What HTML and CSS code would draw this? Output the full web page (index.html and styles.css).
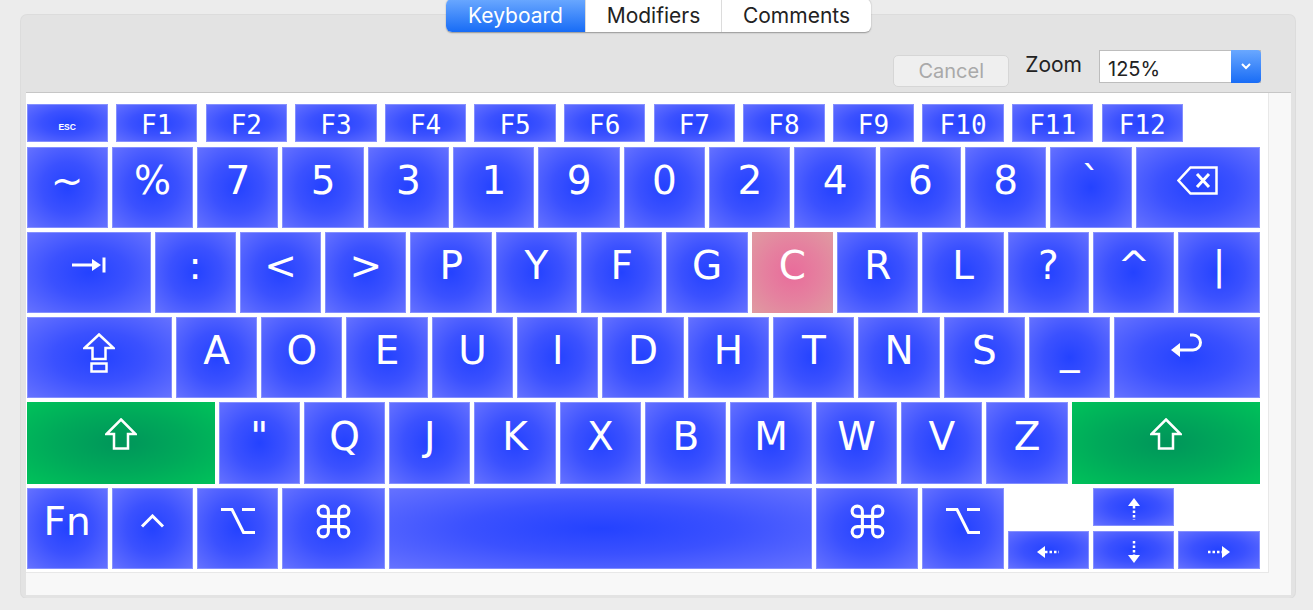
FILE: index.html
```html
<!DOCTYPE html>
<html>
<head>
<meta charset="utf-8">
<link rel="stylesheet" href="styles.css">
</head>
<body>
<div class="panel">
  <div class="tabs">
    <div class="tab sel t1">Keyboard</div>
    <div class="tab t2">Modifiers</div>
    <div class="tab t3">Comments</div>
  </div>
  <div class="toolbar">
    <div class="cancel">Cancel</div>
    <div class="zlabel">Zoom</div>
    <div class="select">
      <div class="val">125%</div>
      <div class="btn"><svg width="10" height="7" viewBox="0 0 10 7"><polyline points="1,1 5,5 9,1" fill="none" stroke="#fff" stroke-width="2"/></svg></div>
    </div>
  </div>
  <div class="scroll">
    <div class="doc">
      <div class="fnrow">
        <div class="k fnk esc">ESC</div>
        <div class="k fnk">F1</div>
        <div class="k fnk">F2</div>
        <div class="k fnk">F3</div>
        <div class="k fnk">F4</div>
        <div class="k fnk">F5</div>
        <div class="k fnk">F6</div>
        <div class="k fnk">F7</div>
        <div class="k fnk">F8</div>
        <div class="k fnk">F9</div>
        <div class="k fnk">F10</div>
        <div class="k fnk">F11</div>
        <div class="k fnk">F12</div>
      </div>
      <div class="row">
        <div class="k w1">~</div>
        <div class="k w1">%</div>
        <div class="k w1">7</div>
        <div class="k w1">5</div>
        <div class="k w1">3</div>
        <div class="k w1">1</div>
        <div class="k w1">9</div>
        <div class="k w1">0</div>
        <div class="k w1">2</div>
        <div class="k w1">4</div>
        <div class="k w1">6</div>
        <div class="k w1">8</div>
        <div class="k w1">`</div>
        <div class="k w15"><svg width="41" height="29" viewBox="0 0 41 29"><path d="M13.5 1.5H39.5V27.5H13.5L1.5 14.5Z" fill="none" stroke="#fff" stroke-width="2.5"/><path d="M20 8L32 21M32 8L20 21" stroke="#fff" stroke-width="3"/></svg></div>
      </div>
      <div class="row">
        <div class="k w15"><svg width="34" height="16" viewBox="0 0 34 16"><path d="M0 8H24" stroke="#fff" stroke-width="3"/><path d="M20 2L29 8L20 14Z" fill="#fff"/><rect x="30.5" y="0.5" width="3" height="15" fill="#fff"/></svg></div>
        <div class="k w1">:</div>
        <div class="k w1">&lt;</div>
        <div class="k w1">&gt;</div>
        <div class="k w1">P</div>
        <div class="k w1">Y</div>
        <div class="k w1">F</div>
        <div class="k w1">G</div>
        <div class="k w1 pink">C</div>
        <div class="k w1">R</div>
        <div class="k w1">L</div>
        <div class="k w1">?</div>
        <div class="k w1">^</div>
        <div class="k w1">|</div>
      </div>
      <div class="row">
        <div class="k w175 caps"><svg width="32" height="40" viewBox="0 0 32 40"><path d="M16 1.5L30.5 15H22.5V26H9.5V15H1.5Z" fill="none" stroke="#fff" stroke-width="2.5" stroke-linejoin="miter"/><rect x="8.5" y="30.5" width="15" height="8" fill="none" stroke="#fff" stroke-width="2.5"/></svg></div>
        <div class="k w1">A</div>
        <div class="k w1">O</div>
        <div class="k w1">E</div>
        <div class="k w1">U</div>
        <div class="k w1">I</div>
        <div class="k w1">D</div>
        <div class="k w1">H</div>
        <div class="k w1">T</div>
        <div class="k w1">N</div>
        <div class="k w1">S</div>
        <div class="k w1">_</div>
        <div class="k w175 ret"><svg width="32" height="26" viewBox="0 0 32 26"><path d="M0 17L9 10V24Z" fill="#fff"/><path d="M7 17H22A7.5 7.5 0 0 0 22 2H19" fill="none" stroke="#fff" stroke-width="3"/></svg></div>
      </div>
      <div class="row">
        <div class="k w225 green shift"><svg width="32" height="32" viewBox="0 0 32 32"><path d="M16 1.5L30.5 16H23V30.5H9V16H1.5Z" fill="none" stroke="#fff" stroke-width="2.5"/></svg></div>
        <div class="k w1">"</div>
        <div class="k w1">Q</div>
        <div class="k w1">J</div>
        <div class="k w1">K</div>
        <div class="k w1">X</div>
        <div class="k w1">B</div>
        <div class="k w1">M</div>
        <div class="k w1">W</div>
        <div class="k w1">V</div>
        <div class="k w1">Z</div>
        <div class="k w225 green shift"><svg width="32" height="32" viewBox="0 0 32 32"><path d="M16 1.5L30.5 16H23V30.5H9V16H1.5Z" fill="none" stroke="#fff" stroke-width="2.5"/></svg></div>
      </div>
      <div class="row">
        <div class="k w1">Fn</div>
        <div class="k w1"><svg width="25" height="14" viewBox="0 0 25 14"><polyline points="2,12.5 12.5,2 23,12.5" fill="none" stroke="#fff" stroke-width="3"/></svg></div>
        <div class="k w1"><svg width="34" height="28" viewBox="0 0 34 28"><path d="M0 2.5H11L22.5 25.5H34M21 2.5H34" fill="none" stroke="#fff" stroke-width="3"/></svg></div>
        <div class="k w125"><svg width="41" height="41" viewBox="0 0 24 24"><path d="M15 6v12a3 3 0 1 0 3-3H6a3 3 0 1 0 3 3V6a3 3 0 1 0-3 3h12a3 3 0 1 0-3-3" fill="none" stroke="#fff" stroke-width="1.8"/></svg></div>
        <div class="k w5"></div>
        <div class="k w125"><svg width="41" height="41" viewBox="0 0 24 24"><path d="M15 6v12a3 3 0 1 0 3-3H6a3 3 0 1 0 3 3V6a3 3 0 1 0-3 3h12a3 3 0 1 0-3-3" fill="none" stroke="#fff" stroke-width="1.8"/></svg></div>
        <div class="k w1"><svg width="34" height="28" viewBox="0 0 34 28"><path d="M0 2.5H11L22.5 25.5H34M21 2.5H34" fill="none" stroke="#fff" stroke-width="3"/></svg></div>
        <div class="arrows">
          <div class="arow">
            <div class="spacer"></div>
            <div class="k w1 ak"><svg width="12" height="22" viewBox="0 0 12 22"><path d="M6 0L12 8H0Z" fill="#fff"/><path d="M6 8V22" stroke="#fff" stroke-width="2.5" stroke-dasharray="2.5 2"/></svg></div>
          </div>
          <div class="arow">
            <div class="k w1 ak"><svg width="22" height="12" viewBox="0 0 22 12"><path d="M0 6L8 0V12Z" fill="#fff"/><path d="M8 6H22" stroke="#fff" stroke-width="2.5" stroke-dasharray="2.5 2"/></svg></div>
            <div class="k w1 ak"><svg width="12" height="22" viewBox="0 0 12 22"><path d="M6 22L12 14H0Z" fill="#fff"/><path d="M6 0V14" stroke="#fff" stroke-width="2.5" stroke-dasharray="2.5 2"/></svg></div>
            <div class="k w1 ak"><svg width="22" height="12" viewBox="0 0 22 12"><path d="M22 6L14 0V12Z" fill="#fff"/><path d="M0 6H14" stroke="#fff" stroke-width="2.5" stroke-dasharray="2.5 2"/></svg></div>
          </div>
        </div>
      </div>
    </div>
  </div>
</div>
</body>
</html>
```
FILE: styles.css
```css
* { box-sizing: border-box; }
body {
  margin: 0;
  background: #ececec;
  font-family: Inter, "Liberation Sans", sans-serif;
}
.panel {
  position: relative;
  margin: 15px 0 0 21px;
  width: 1274px;
  height: 583px;
  background: #e3e3e3;
  border-radius: 6px;
  box-shadow: 0 0 0 1px #dcdcdc;
}
.tabs {
  position: absolute;
  top: -16px;
  left: 425px;
  display: flex;
  height: 33px;
  background: #fff;
  border-radius: 6px;
  overflow: hidden;
  box-shadow: 0 0.5px 1.5px rgba(0,0,0,0.35);
}
.tab {
  display: flex;
  align-items: center;
  justify-content: center;
  font-size: 21px;
  color: #222;
  border-left: 1px solid #dcdcdc;
}
.tab.sel {
  background: linear-gradient(#6aa8ff, #186cf6);
  color: #fff;
  border-left: none;
}
.t1 { width: 139px; }
.t2 { width: 136px; }
.t3 { width: 150px; }
.toolbar {
  height: 77px;
  display: flex;
  justify-content: flex-end;
  align-items: flex-start;
  padding-right: 34px;
}
.cancel {
  margin-top: 40px;
  width: 116px;
  height: 32px;
  border: 1px solid #d6d6d6;
  border-radius: 5px;
  background: #efefef;
  color: #a9a9a9;
  font-size: 20px;
  display: flex;
  align-items: center;
  justify-content: center;
}
.zlabel {
  margin: 37px 0 0 16px;
  font-size: 21px;
  line-height: 25px;
  color: #222;
}
.select {
  margin: 35px 0 0 17px;
  width: 162px;
  height: 33px;
  border: 1px solid #bdbdbd;
  background: #fff;
  display: flex;
}
.select .val {
  flex: 1;
  font-size: 20px;
  padding: 4px 0 0 8px;
  display: flex;
  align-items: center;
  color: #222;
}
.select .btn {
  width: 30px;
  margin: -1px -1px -1px 0;
  background: linear-gradient(#6aa8ff, #186cf6);
  border-radius: 0 4px 4px 0;
  display: flex;
  align-items: center;
  justify-content: center;
}
.scroll {
  margin: 0 4px 0 5px;
  height: 503px;
  border-top: 1px solid #c6c6c6;
  background: #f8f8f8;
}
.doc {
  width: 1243px;
  height: 480px;
  background: #fff;
  border-right: 1px solid #e8e8e8;
  border-bottom: 1px solid #e8e8e8;
  padding: 11px 0 0 0.5px;
}
.fnrow {
  display: flex;
  gap: 8.27px;
  height: 38px;
  margin-bottom: 4.5px;
}
.row {
  display: flex;
  gap: 4px;
  height: 81.33px;
  margin-bottom: 4px;
}
.k {
  flex: none;
  height: 100%;
  display: flex;
  align-items: center;
  justify-content: center;
  color: #fff;
  font-family: "DejaVu Sans", sans-serif;
  font-size: 39px;
  line-height: 1;
  padding-bottom: 14px;
  background: radial-gradient(ellipse farthest-corner at 50% 50%, #2442ff 0%, #3b51ff 45%, #6672ff 100%);
  box-shadow: inset 0 0 0 1px rgba(150,160,255,0.7);
}
.w1 { width: 81.33px; }
.w125 { width: 102.67px; }
.w15 { width: 124px; }
.w175 { width: 145.33px; }
.w225 { width: 188px; }
.w5 { width: 422.67px; }
.fnk {
  width: 81.33px;
  font-family: "DejaVu Sans Mono", monospace;
  font-size: 26px;
  padding: 3px 0 0;
}
.esc {
  font-family: "Liberation Sans", sans-serif;
  font-weight: bold;
  font-size: 8.5px;
  padding-top: 9px;
}
.pink {
  background: radial-gradient(ellipse farthest-corner at 50% 50%, #e96c9b 0%, #e5819f 50%, #df9ba1 100%);
  box-shadow: none;
}
.green {
  background: radial-gradient(ellipse farthest-corner at 50% 50%, #00955a 0%, #00a95a 50%, #00c25a 100%);
  box-shadow: none;
}
.caps { padding-bottom: 9px; }
.shift { padding-bottom: 18px; }
.ret { padding-bottom: 23px; }
.arrows {
  width: 252px;
  display: flex;
  flex-direction: column;
  gap: 5px;
}
.arow {
  display: flex;
  gap: 4px;
  height: 38px;
}
.arow .k {
  height: 38px;
  padding: 5px 0 0;
}
.spacer { width: 81.33px; flex: none; }
```
